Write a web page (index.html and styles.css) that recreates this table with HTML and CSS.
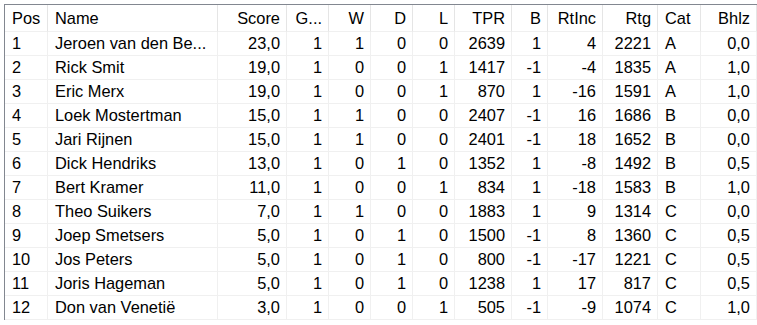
FILE: index.html
```html
<!DOCTYPE html>
<html>
<head>
<meta charset="utf-8">
<link rel="stylesheet" href="styles.css">
</head>
<body>
<div class="frame">
<table class="grid">
<thead>
<tr>
<th class="c-pos l">Pos</th><th class="c-name l">Name</th><th class="c-score">Score</th><th class="c-g">G...</th><th class="c-w">W</th><th class="c-d">D</th><th class="c-l">L</th><th class="c-tpr">TPR</th><th class="c-b">B</th><th class="c-rti">RtInc</th><th class="c-rtg">Rtg</th><th class="c-cat l">Cat</th><th class="c-bh">Bhlz</th>
</tr>
</thead>
<tbody>
<tr><td class="l">1</td><td class="l">Jeroen van den Be...</td><td>23,0</td><td>1</td><td>1</td><td>0</td><td>0</td><td>2639</td><td>1</td><td>4</td><td>2221</td><td class="l">A</td><td>0,0</td></tr>
<tr><td class="l">2</td><td class="l">Rick Smit</td><td>19,0</td><td>1</td><td>0</td><td>0</td><td>1</td><td>1417</td><td>-1</td><td>-4</td><td>1835</td><td class="l">A</td><td>1,0</td></tr>
<tr><td class="l">3</td><td class="l">Eric Merx</td><td>19,0</td><td>1</td><td>0</td><td>0</td><td>1</td><td>870</td><td>1</td><td>-16</td><td>1591</td><td class="l">A</td><td>1,0</td></tr>
<tr><td class="l">4</td><td class="l">Loek Mostertman</td><td>15,0</td><td>1</td><td>1</td><td>0</td><td>0</td><td>2407</td><td>-1</td><td>16</td><td>1686</td><td class="l">B</td><td>0,0</td></tr>
<tr><td class="l">5</td><td class="l">Jari Rijnen</td><td>15,0</td><td>1</td><td>1</td><td>0</td><td>0</td><td>2401</td><td>-1</td><td>18</td><td>1652</td><td class="l">B</td><td>0,0</td></tr>
<tr><td class="l">6</td><td class="l">Dick Hendriks</td><td>13,0</td><td>1</td><td>0</td><td>1</td><td>0</td><td>1352</td><td>1</td><td>-8</td><td>1492</td><td class="l">B</td><td>0,5</td></tr>
<tr><td class="l">7</td><td class="l">Bert Kramer</td><td>11,0</td><td>1</td><td>0</td><td>0</td><td>1</td><td>834</td><td>1</td><td>-18</td><td>1583</td><td class="l">B</td><td>1,0</td></tr>
<tr><td class="l">8</td><td class="l">Theo Suikers</td><td>7,0</td><td>1</td><td>1</td><td>0</td><td>0</td><td>1883</td><td>1</td><td>9</td><td>1314</td><td class="l">C</td><td>0,0</td></tr>
<tr><td class="l">9</td><td class="l">Joep Smetsers</td><td>5,0</td><td>1</td><td>0</td><td>1</td><td>0</td><td>1500</td><td>-1</td><td>8</td><td>1360</td><td class="l">C</td><td>0,5</td></tr>
<tr><td class="l">10</td><td class="l">Jos Peters</td><td>5,0</td><td>1</td><td>0</td><td>1</td><td>0</td><td>800</td><td>-1</td><td>-17</td><td>1221</td><td class="l">C</td><td>0,5</td></tr>
<tr><td class="l">11</td><td class="l">Joris Hageman</td><td>5,0</td><td>1</td><td>0</td><td>1</td><td>0</td><td>1238</td><td>1</td><td>17</td><td>817</td><td class="l">C</td><td>0,5</td></tr>
<tr><td class="l">12</td><td class="l">Don van Venetië</td><td>3,0</td><td>1</td><td>0</td><td>0</td><td>1</td><td>505</td><td>-1</td><td>-9</td><td>1074</td><td class="l">C</td><td>1,0</td></tr>
</tbody>
</table>
</div>
</body>
</html>
```

FILE: styles.css
```css
html, body {
  margin: 0;
  padding: 0;
  background: #ffffff;
}
body {
  padding: 4px 0 0 4px;
  font-family: "Liberation Sans", Arial, sans-serif;
  font-size: 16.4px;
  color: #000000;
}
.frame {
  border-top: 1px solid #828790;
  border-left: 1px solid #828790;
  width: 753px;
  overflow: hidden;
}
.grid {
  border-collapse: separate;
  border-spacing: 0;
  table-layout: fixed;
  width: 752px;
}
.grid th, .grid td {
  box-sizing: border-box;
  padding: 0 6px 0 7px;
  text-align: right;
  white-space: nowrap;
  overflow: hidden;
  font-weight: normal;
  border-right: 1px solid #f0f0f0;
  border-bottom: 1px solid #f0f0f0;
  vertical-align: middle;
}
.grid th {
  height: 27px;
  border-right-color: #e5e5e5;
  padding-top: 1px;
}
.grid td {
  height: 24px;
}
.grid .l {
  text-align: left;
}
.c-pos { width: 43px; }
.c-name { width: 170px; }
.c-score { width: 69px; }
.c-g, .c-w, .c-d, .c-l { width: 42px; }
.c-tpr { width: 57px; }
.c-b { width: 36px; }
.c-rti, .c-rtg { width: 55px; }
.c-cat { width: 43px; }
.c-bh { width: 56px; }
```
